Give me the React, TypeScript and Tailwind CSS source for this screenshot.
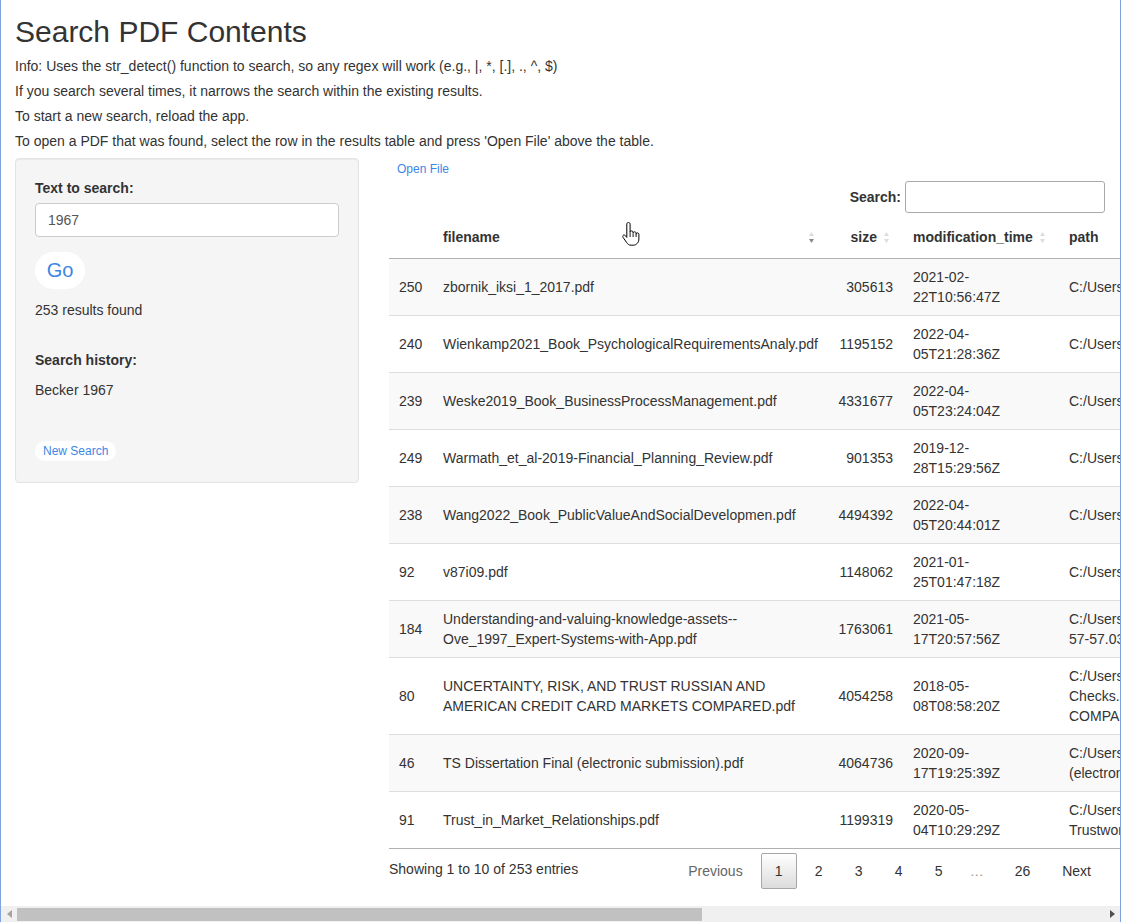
import React from "react";

type Row = {
  id: string;
  name: string[];
  size: string;
  time: string[];
  path: string[];
};

const rows: Row[] = [
  { id: "250", name: ["zbornik_iksi_1_2017.pdf"], size: "305613", time: ["2021-02-", "22T10:56:47Z"], path: ["C:/Users/user/Documents/Literature/zbornik_iksi_1_2017.pdf"] },
  { id: "240", name: ["Wienkamp2021_Book_PsychologicalRequirementsAnaly.pdf"], size: "1195152", time: ["2022-04-", "05T21:28:36Z"], path: ["C:/Users/user/Documents/Literature/Wienkamp2021_Book.pdf"] },
  { id: "239", name: ["Weske2019_Book_BusinessProcessManagement.pdf"], size: "4331677", time: ["2022-04-", "05T23:24:04Z"], path: ["C:/Users/user/Documents/Literature/Weske2019_Book.pdf"] },
  { id: "249", name: ["Warmath_et_al-2019-Financial_Planning_Review.pdf"], size: "901353", time: ["2019-12-", "28T15:29:56Z"], path: ["C:/Users/user/Documents/Literature/Warmath_et_al-2019.pdf"] },
  { id: "238", name: ["Wang2022_Book_PublicValueAndSocialDevelopmen.pdf"], size: "4494392", time: ["2022-04-", "05T20:44:01Z"], path: ["C:/Users/user/Documents/Literature/Wang2022_Book.pdf"] },
  { id: "92", name: ["v87i09.pdf"], size: "1148062", time: ["2021-01-", "25T01:47:18Z"], path: ["C:/Users/user/Documents/Literature/v87i09.pdf"] },
  { id: "184", name: ["Understanding-and-valuing-knowledge-assets--", "Ove_1997_Expert-Systems-with-App.pdf"], size: "1763061", time: ["2021-05-", "17T20:57:56Z"], path: ["C:/Users/user/Documents/Literature/Understanding-and-valuing-", "57-57.03.pdf"] },
  { id: "80", name: ["UNCERTAINTY, RISK, AND TRUST RUSSIAN AND", "AMERICAN CREDIT CARD MARKETS COMPARED.pdf"], size: "4054258", time: ["2018-05-", "08T08:58:20Z"], path: ["C:/Users/user/Documents/Literature/Credit", "Checks. UNCERTAINTY, RISK, AND TRUST", "COMPARED.pdf"] },
  { id: "46", name: ["TS Dissertation Final (electronic submission).pdf"], size: "4064736", time: ["2020-09-", "17T19:25:39Z"], path: ["C:/Users/user/Documents/Literature/TS Dissertation Final", "(electronic submission).pdf"] },
  { id: "91", name: ["Trust_in_Market_Relationships.pdf"], size: "1199319", time: ["2020-05-", "04T10:29:29Z"], path: ["C:/Users/user/Documents/Literature/", "Trustworthiness/Trust_in_Market_Relationships.pdf"] },
];

function SortIcon({ desc }: { desc?: boolean }) {
  return (
    <svg width="7" height="13" viewBox="0 0 7 13" className="shrink-0">
      <path d="M3.5 1 L6 5 L1 5 Z" fill="#dcdcdc" />
      <path d="M3.5 12 L6 8 L1 8 Z" fill={desc ? "#8a8a8a" : "#dcdcdc"} />
    </svg>
  );
}

function Lines({ items }: { items: string[] }) {
  return (
    <>
      {items.map((t, i) => (
        <div key={i} className="whitespace-nowrap">
          {t}
        </div>
      ))}
    </>
  );
}

export default function App() {
  return (
    <div
      className="relative w-[1121px] h-[922px] flex flex-col bg-white border-x border-[#7ea3de] text-[#333] text-[14px] overflow-hidden"
      style={{ fontFamily: '"Liberation Sans", Arial, sans-serif' }}
    >
      <div className="flex-1 overflow-hidden pl-[14px]">
        <h2 className="text-[30px] leading-[33px] mt-[15px] mb-[6px] font-normal">Search PDF Contents</h2>
        <p className="leading-[25px]">Info: Uses the str_detect() function to search, so any regex will work (e.g., |, *, [.], ., ^, $)</p>
        <p className="leading-[25px]">If you search several times, it narrows the search within the existing results.</p>
        <p className="leading-[25px]">To start a new search, reload the app.</p>
        <p className="leading-[25px]">To open a PDF that was found, select the row in the results table and press 'Open File' above the table.</p>

        <div className="flex items-start mt-[4px]">
          {/* sidebar */}
          <div className="w-[344px] shrink-0 bg-[#f5f5f5] border border-[#e3e3e3] rounded-[4px] p-[19px] pb-[21px] shadow-[inset_0_1px_1px_rgba(0,0,0,0.05)]">
            <div className="font-bold leading-[20px] mb-[5px]">Text to search:</div>
            <div className="h-[34px] bg-white border border-[#ccc] rounded-[4px] px-[12px] flex items-center text-[#555]">1967</div>
            <button className="mt-[15px] h-[37px] w-[50px] rounded-full bg-white text-[#3d87e6] text-[20px] leading-[37px]">Go</button>
            <div className="mt-[11px] leading-[20px]">253 results found</div>
            <div className="mt-[30px] font-bold leading-[20px]">Search history:</div>
            <div className="mt-[10px] leading-[20px]">Becker 1967</div>
            <button className="mt-[41px] h-[20px] px-[8px] rounded-full bg-white text-[#3d87e6] text-[12px] leading-[20px] block">New Search</button>
          </div>

          {/* main */}
          <div className="ml-[30px] w-[716px] shrink-0">
            <button className="mt-[1px] px-[8px] text-[12px] leading-[18px] text-[#3d87e6]">Open File</button>
            <div className="mt-[2px] flex justify-end items-center">
              <span className="font-bold mr-[4px]">Search:</span>
              <div className="w-[200px] h-[32px] border border-[#aaa] rounded-[3px] bg-white" />
            </div>

            <table className="mt-[5px] border-collapse table-fixed w-[1000px] text-left">
              <colgroup>
                <col className="w-[44px]" />
                <col className="w-[395px]" />
                <col className="w-[75px]" />
                <col className="w-[156px]" />
                <col className="w-[330px]" />
              </colgroup>
              <thead>
                <tr className="border-b border-[#b0b0b0]">
                  <th className="h-[40px]" />
                  <th className="px-[10px] font-bold">
                    <div className="flex items-center justify-between pr-[3px]">
                      <span>filename</span>
                      <SortIcon desc />
                    </div>
                  </th>
                  <th className="pl-[10px] pr-[13px] font-bold">
                    <div className="flex items-center justify-end gap-[6px]">
                      <span>size</span>
                      <SortIcon />
                    </div>
                  </th>
                  <th className="px-[10px] font-bold">
                    <div className="flex items-center justify-between pr-[3px]">
                      <span>modification_time</span>
                      <SortIcon />
                    </div>
                  </th>
                  <th className="px-[10px] font-bold">path</th>
                </tr>
              </thead>
              <tbody>
                {rows.map((r, i) => (
                  <tr key={r.id} className={`${i % 2 === 0 ? "bg-[#f9f9f9]" : "bg-white"} ${i > 0 ? "border-t border-[#ddd]" : ""} leading-[20px]`}>
                    <td className="px-[10px] py-[8px] align-middle">{r.id}</td>
                    <td className="px-[10px] py-[8px] align-middle"><Lines items={r.name} /></td>
                    <td className="px-[10px] py-[8px] align-middle text-right">{r.size}</td>
                    <td className="px-[10px] py-[8px] align-middle"><Lines items={r.time} /></td>
                    <td className="px-[10px] py-[8px] align-middle"><Lines items={r.path} /></td>
                  </tr>
                ))}
                <tr className="border-t border-[#b0b0b0]"><td colSpan={5} /></tr>
              </tbody>
            </table>

            <div className="flex items-start">
              <div className="pt-[10px] leading-[21px]">Showing 1 to 10 of 253 entries</div>
              <div className="ml-auto mt-[4px] flex items-center leading-[20px]">
                <span className="px-[14px] py-[8px] mr-[2px] text-[#666]">Previous</span>
                <span className="w-[36px] h-[36px] ml-[2px] flex items-center justify-center border border-[#a6a6a6] rounded-[2px] bg-gradient-to-b from-white to-[#dcdcdc]">1</span>
                <span className="w-[36px] ml-[4px] text-center">2</span>
                <span className="w-[36px] ml-[4px] text-center">3</span>
                <span className="w-[36px] ml-[4px] text-center">4</span>
                <span className="w-[36px] ml-[4px] text-center">5</span>
                <span className="w-[36px] ml-[2px] text-center text-[#999]">…</span>
                <span className="px-[14px] ml-[6px]">26</span>
                <span className="px-[14px] ml-[4px]">Next</span>
              </div>
            </div>
          </div>
        </div>
      </div>

      {/* horizontal scrollbar */}
      <div className="h-[16px] shrink-0 bg-[#f0f0f0] flex items-center">
        <div className="w-[16px] flex justify-center">
          <svg width="5" height="8" viewBox="0 0 5 8"><path d="M5 0 L0 4 L5 8 Z" fill="#a3a3a3" /></svg>
        </div>
        <div className="w-[685px] h-[13px] bg-[#c1c1c1]" />
        <div className="ml-auto w-[16px] flex justify-center">
          <svg width="5" height="8" viewBox="0 0 5 8"><path d="M0 0 L5 4 L0 8 Z" fill="#505050" /></svg>
        </div>
      </div>

      {/* mouse cursor */}
      <svg
        className="absolute left-[620px] top-[221px]"
        width="20"
        height="26"
        viewBox="0 0 20 26"
      >
        <path
          d="M7.5 1.5c.9 0 1.6.7 1.6 1.6v8.2c0-.8.7-1.4 1.5-1.4s1.5.6 1.5 1.4v.9c0-.8.7-1.4 1.5-1.4s1.5.6 1.5 1.4v1c0-.8.6-1.3 1.4-1.3s1.4.6 1.4 1.4v4.5c0 3.5-2.3 6.4-5.6 6.4h-2.2c-2.1 0-3.3-1-4.4-2.6l-3.7-5.3c-.5-.7-.3-1.7.4-2.1.7-.4 1.5-.2 2 .4l1.4 1.8V3.1c0-.9.7-1.6 1.6-1.6z"
          fill="#fff"
          stroke="#000"
          strokeWidth="1"
          strokeLinejoin="round"
        />
        <path d="M12.1 12.5v3.5M15.1 13v3M9.1 11.5v4.5" stroke="#000" strokeWidth="0.9" />
      </svg>
    </div>
  );
}
